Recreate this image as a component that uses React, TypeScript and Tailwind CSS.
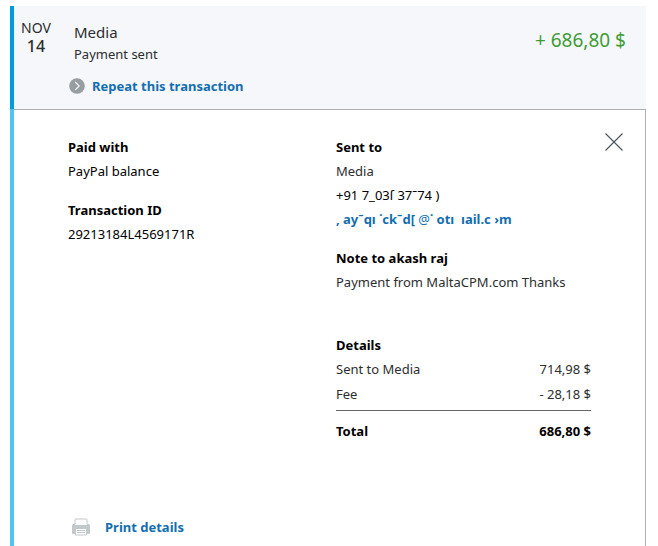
import type { ReactNode } from 'react';

interface FieldProps {
  label: string;
  children: ReactNode;
}

const Field = ({ label, children }: FieldProps) => (
  <section>
    <h3 className="font-bold text-black">{label}</h3>
    {children}
  </section>
);

const ArrowIcon = () => (
  <svg className="size-4 shrink-0" viewBox="0 0 16 16" fill="none" aria-hidden="true">
    <circle cx="8" cy="8" r="7.8" fill="#979da1" />
    <path d="M6.2 4l4 4-4 4" stroke="#f5f7fa" strokeWidth="1.1" />
  </svg>
);

const PrinterIcon = () => (
  <svg className="h-[18px] w-[18px] shrink-0" viewBox="0 0 18 18" fill="none" aria-hidden="true">
    <path d="M3 6V1.5q0-.5.5-.5h11q.5 0 .5.5V6" stroke="#c3c8cb" />
    <path d="M1.5 6H3v1h12V6h1.5Q18 6 18 7.5V15q0 1-1 1H1q-1 0-1-1V7.5Q0 6 1.5 6z" fill="#c3c8cb" />
    <path d="M3.5 10.5h11v6.5h-11z" fill="#fff" stroke="#c3c8cb" />
    <path d="M5 12.5h8M5 14.5h8" stroke="#c3c8cb" />
  </svg>
);

const CloseIcon = () => (
  <svg className="size-[18px]" viewBox="0 0 18 18" fill="none" aria-hidden="true">
    <path d="M.5.5l17 17M17.5.5l-17 17" stroke="#4a545c" strokeWidth="1.1" />
  </svg>
);

const Summary = () => (
  <header className="flex items-start border-l-4 border-[#009cde] bg-[#f5f7fa] pt-3 pr-5 pb-[13px]">
    <div className="w-11 pt-0.5 text-center">
      <div className="text-sm leading-4">NOV</div>
      <div className="text-base leading-5 font-medium">14</div>
    </div>
    <div className="flex-1 pl-4">
      <h2 className="text-[15px] leading-7">Media</h2>
      <p className="leading-4">Payment sent</p>
      <a href="#repeat" className="mt-3.5 -ml-[5px] flex w-fit items-center gap-[7px] leading-5 font-bold text-[#136eb0]">
        <ArrowIcon />
        Repeat this transaction
      </a>
    </div>
    <div className="pt-2 text-[19px] leading-7 text-[#3f9c35]">+ 686,80 $</div>
  </header>
);

const Breakdown = () => (
  <section className="pt-6">
    <h3 className="font-bold text-black">Details</h3>
    <table className="w-full leading-[25px]">
      <tbody>
        <tr>
          <th scope="row" className="text-left font-normal">Sent to Media</th>
          <td className="text-right">714,98 $</td>
        </tr>
        <tr className="border-b border-[#666]">
          <th scope="row" className="pb-[3px] text-left font-normal">Fee</th>
          <td className="pb-[3px] text-right">- 28,18 $</td>
        </tr>
        <tr className="font-bold text-black">
          <th scope="row" className="pt-2 text-left">Total</th>
          <td className="pt-2 text-right">686,80 $</td>
        </tr>
      </tbody>
    </table>
  </section>
);

const App = () => (
  <div className="flex min-h-screen flex-col bg-white pt-1.5 pr-3 pl-2.5 font-['Noto_Sans',sans-serif] text-[13px] leading-6 text-[#2c2e2f]">
    <Summary />
    <main className="flex flex-1 flex-col border-l-4 border-[#4fc5f2]">
      <div className="flex flex-1 flex-col border-t border-r border-[#acb0b3] pt-[23px] pr-[22px] pb-[7px] pl-[54px]">
        <div className="flex flex-1 items-start">
          <div className="flex flex-1 flex-col gap-[15px] pt-0.5">
            <Field label="Paid with">
              <p className="text-black">PayPal balance</p>
            </Field>
            <Field label="Transaction ID">
              <p className="text-black">29213184L4569171R</p>
            </Field>
          </div>
          <div className="flex w-[255px] flex-col gap-[15px] pt-0.5">
            <Field label="Sent to">
              <p>Media</p>
              <p className="text-black">+91 7_03ſ 37ˉ74 )</p>
              <a href="#contact" className="block font-bold whitespace-pre text-[#136eb0]">
                {', ayˉqı ˙ckˉd[ '}
                <span className="font-normal">@</span>
                {'˙ otı  ıail.c ›m'}
              </a>
            </Field>
            <Field label="Note to akash raj">
              <p>Payment from MaltaCPM.com Thanks</p>
            </Field>
            <Breakdown />
          </div>
          <button type="button" aria-label="Close" className="ml-3.5 cursor-pointer">
            <CloseIcon />
          </button>
        </div>
        <a href="#print" className="ml-1 flex w-fit items-center gap-[15px] font-bold text-[#136eb0]">
          <PrinterIcon />
          Print details
        </a>
      </div>
    </main>
  </div>
);

export default App;
